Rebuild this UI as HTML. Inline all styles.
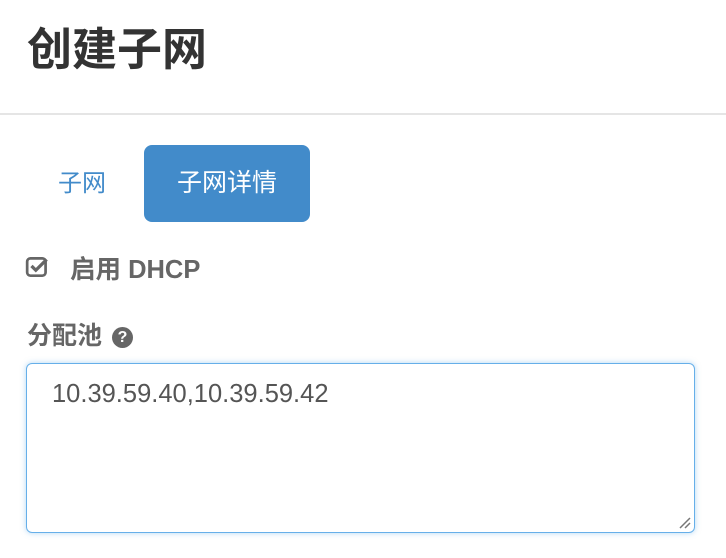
<!DOCTYPE html>
<html><head><meta charset="utf-8"><style>
body{margin:0;width:726px;height:558px;background:#fff;font-family:"Liberation Sans","Noto Sans CJK SC",sans-serif;position:relative;overflow:hidden}
.a{position:absolute;white-space:nowrap}
</style></head><body>
<div class="a" style="left:27px;top:20px;font-size:45px;line-height:60px;color:#333;font-weight:bold">创建子网</div>
<div class="a" style="left:0;top:113px;width:726px;height:2px;background:#e5e5e5"></div>
<div class="a" style="left:58px;top:168px;font-size:24px;line-height:32px;color:#428bca">子网</div>
<div class="a" style="left:144px;top:145px;width:166px;height:77px;border-radius:8px;background:#428bca;color:#fff;font-size:25px;line-height:77px;text-align:center">子网详情</div>
<svg class="a" style="left:25px;top:255px" width="26" height="24" viewBox="0 0 24 22"><rect x="2" y="3" width="17" height="16" rx="3" fill="none" stroke="#666" stroke-width="2.5"/><path d="M6 10l4 4 10-10" fill="none" stroke="#666" stroke-width="3"/></svg>
<div class="a" style="left:70px;top:254px;font-size:25.5px;line-height:32px;color:#666;font-weight:bold">启用 DHCP</div>
<div class="a" style="left:27px;top:320px;font-size:25px;line-height:32px;color:#666;font-weight:bold">分配池</div>
<div class="a" style="left:112px;top:327px;width:21px;height:21px;border-radius:50%;background:#666;color:#fff;font-size:16px;font-weight:bold;line-height:21px;text-align:center">?</div>
<div class="a" style="left:26px;top:363px;width:667px;height:168px;border:1.5px solid #66afe9;border-radius:6px;box-shadow:0 0 6px rgba(102,175,233,.5)"></div>
<div class="a" style="left:52px;top:378px;font-size:25.5px;line-height:32px;color:#555">10.39.59.40,10.39.59.42</div>
<svg class="a" style="left:678px;top:516px" width="14" height="14"><path d="M2 12L12 2M7 12L12 7" stroke="#777" stroke-width="1.5"/></svg>
</body></html>
